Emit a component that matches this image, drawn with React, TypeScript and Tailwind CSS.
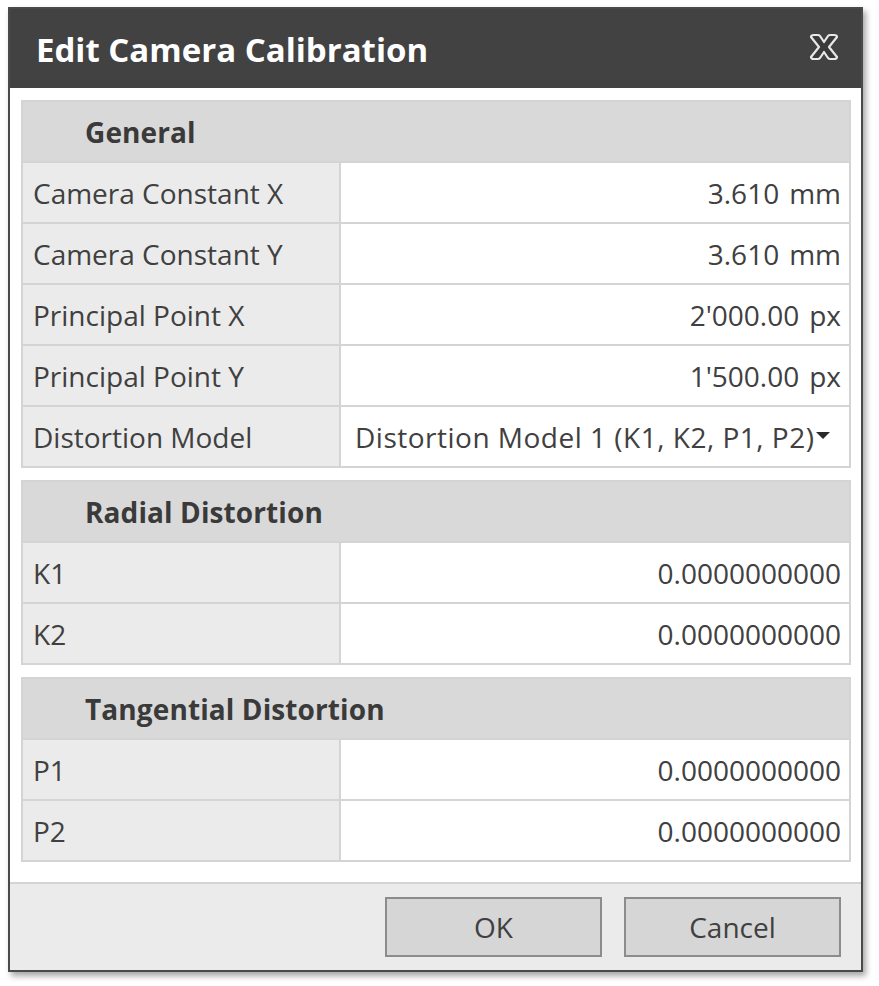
import React from "react";

const font = { fontFamily: '"Open Sans", "Noto Sans", sans-serif' };

type Row = { label: string; value: React.ReactNode };

function Section({ title, rows }: { title: string; rows: Row[] }) {
  return (
    <div className="border-2 border-b-0 border-[#d4d4d4]">
      <div className="h-[61px] border-b-2 border-[#d4d4d4] bg-[#d9d9d9] flex items-center pl-[62px]">
        <span className="text-[28px] font-bold text-[#3a3a3a] tracking-[0.1px]">{title}</span>
      </div>
      {rows.map((r) => (
        <div key={r.label} className="h-[61px] border-b-2 border-[#d4d4d4] flex">
          <div className="w-[318px] shrink-0 bg-[#ebebeb] border-r-2 border-[#d4d4d4] flex items-center pl-[10px] text-[28px] text-[#404040]">
            {r.label}
          </div>
          <div className="flex-1 bg-white flex items-center justify-end pr-[8px] text-[28px] text-[#404040]">
            {r.value}
          </div>
        </div>
      ))}
    </div>
  );
}

function Unit({ n, u }: { n: string; u: string }) {
  return (
    <span>
      {n}
      <span className="ml-[10px]">{u}</span>
    </span>
  );
}

export default function App() {
  const general: Row[] = [
    { label: "Camera Constant X", value: <Unit n="3.610" u="mm" /> },
    { label: "Camera Constant Y", value: <Unit n="3.610" u="mm" /> },
    { label: "Principal Point X", value: <Unit n="2'000.00" u="px" /> },
    { label: "Principal Point Y", value: <Unit n="1'500.00" u="px" /> },
    {
      label: "Distortion Model",
      value: (
        <div className="w-full flex items-center pl-[14px] pr-[2px]">
          <span className="whitespace-nowrap tracking-[0.5px]">Distortion Model 1 (K1, K2, P1, P2)</span>
          <svg width="14" height="8" viewBox="0 0 14 8" className="ml-[2px] mb-[2px] shrink-0">
            <polygon points="0,0 14,0 7,7" fill="#2a2a2a" />
          </svg>
        </div>
      ),
    },
  ];
  const radial: Row[] = [
    { label: "K1", value: "0.0000000000" },
    { label: "K2", value: "0.0000000000" },
  ];
  const tangential: Row[] = [
    { label: "P1", value: "0.0000000000" },
    { label: "P2", value: "0.0000000000" },
  ];

  return (
    <div className="w-[879px] h-[986px] bg-white pt-[7px] pl-[8px]" style={font}>
      <div className="w-[855px] border-2 border-[#4a4a4a] bg-white shadow-[3px_4px_6px_rgba(0,0,0,0.35)]">
        <div className="h-[79px] bg-[#424242] flex items-center justify-between pl-[26px] pr-[21px]">
          <span className="text-[33px] font-bold text-white mt-[3px]">Edit Camera Calibration</span>
          <svg width="32" height="30" viewBox="0 0 32 30" className="mt-[-3px]">
            <path
              d="M3 5 Q3 3 6 3 L10 3 Q11 3 12 4 L16 10 L20 4 Q21 3 22 3 L26 3 Q29 3 29 5 L21 15 L29 25 Q29 27 26 27 L22 27 Q21 27 20 26 L16 20 L12 26 Q11 27 10 27 L6 27 Q3 27 3 25 L11 15 Z"
              fill="#3a3a3a"
              stroke="#e8e8e8"
              strokeWidth="2.2"
              strokeLinejoin="round"
            />
          </svg>
        </div>
        <div className="pl-[11px] pr-[10px] pt-[12px] pb-[20px] flex flex-col gap-[12px]">
          <Section title="General" rows={general} />
          <Section title="Radial Distortion" rows={radial} />
          <Section title="Tangential Distortion" rows={tangential} />
        </div>
        <div className="border-t-2 border-[#d4d4d4] bg-[#ebebeb] pt-[13px] pb-[13px] pr-[20px] flex justify-end gap-[22px]">
          <button className="w-[217px] h-[60px] bg-[#d6d6d6] border-2 border-[#8c8c8c] text-[28px] text-[#404040]">OK</button>
          <button className="w-[217px] h-[60px] bg-[#d6d6d6] border-2 border-[#8c8c8c] text-[28px] text-[#404040]">Cancel</button>
        </div>
      </div>
    </div>
  );
}
